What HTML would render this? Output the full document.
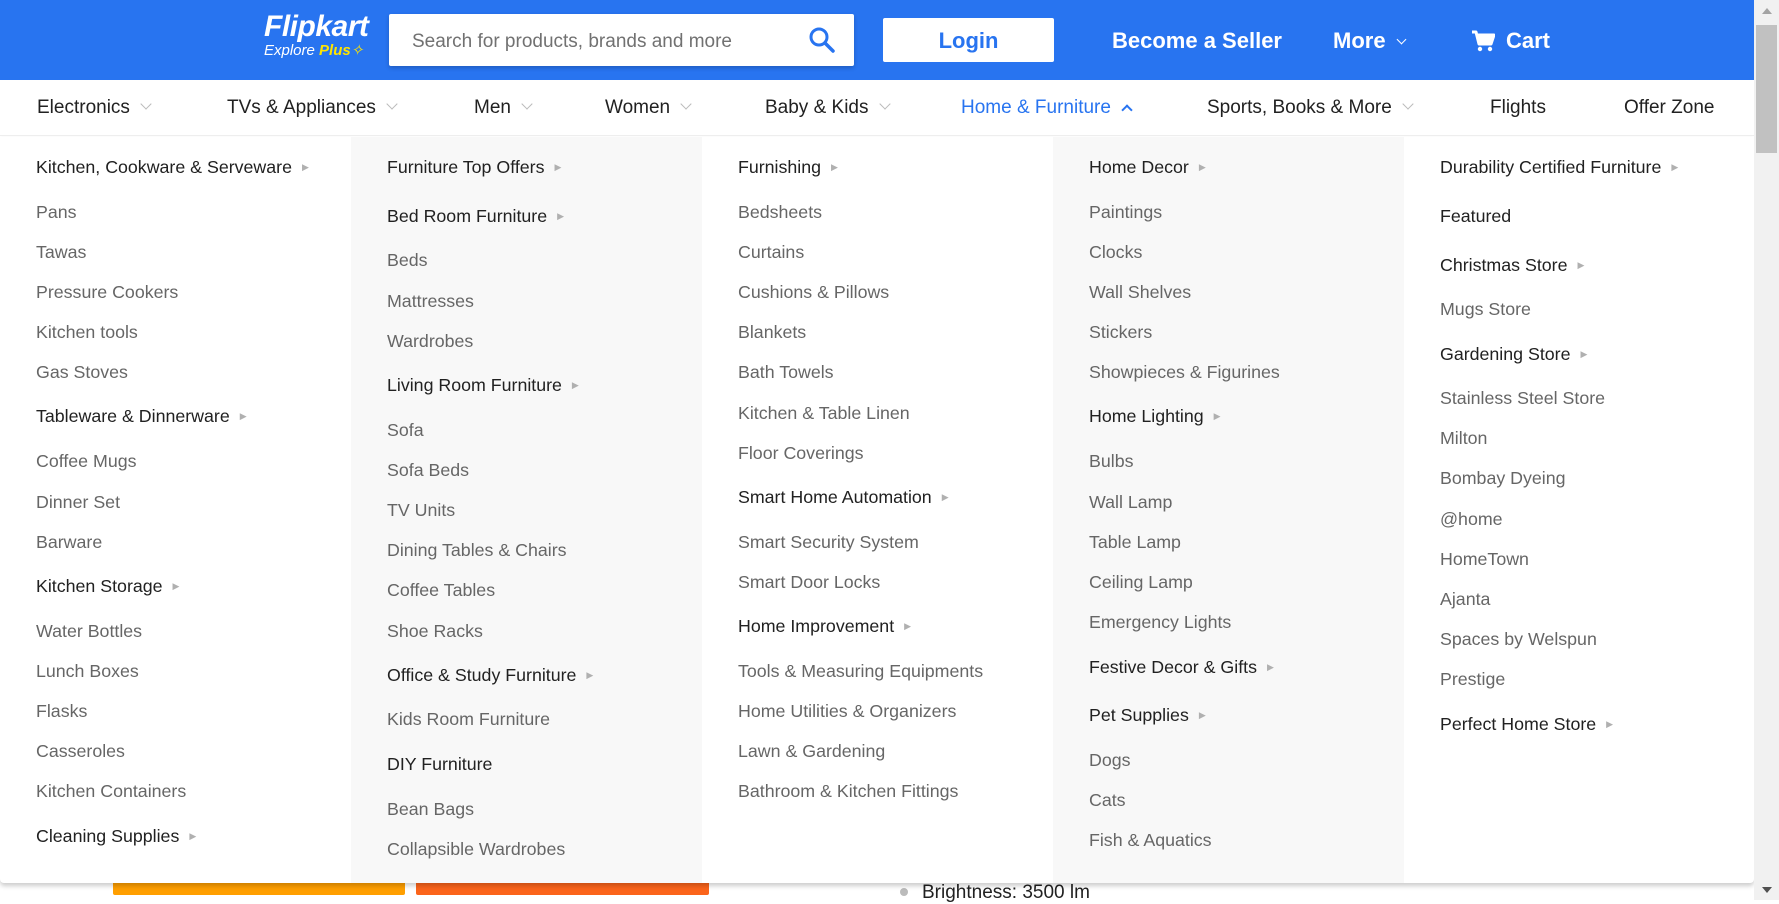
<!DOCTYPE html>
<html><head><meta charset="utf-8"><style>
*{margin:0;padding:0;box-sizing:border-box}
body{width:1779px;height:900px;overflow:hidden;background:#fff;font-family:"Liberation Sans",Arial,sans-serif;position:relative}
.hdr{position:absolute;left:0;top:0;width:1754px;height:80px;background:#2874f0}
.logo{position:absolute;left:264px;top:10px;color:#fff}
.logo .f{font-size:30px;font-weight:bold;font-style:italic;letter-spacing:-0.5px}
.logo .e{font-size:15px;font-style:italic;margin-top:-3px}
.logo .e b{color:#ffe500}
.search{position:absolute;left:389px;top:14px;width:465px;height:52px;background:#fff;border-radius:2px;box-shadow:0 2px 4px rgba(0,0,0,.2)}
.search span{position:absolute;left:23px;top:17px;font-size:19px;color:#717171}
.search svg{position:absolute;right:18px;top:12px}
.login{position:absolute;left:883px;top:18px;width:171px;height:44px;background:#fff;color:#2874f0;font-size:22px;font-weight:bold;text-align:center;line-height:46px;border-radius:2px}
.ht{position:absolute;top:28px;color:#fff;font-size:22px;font-weight:bold}
.nav{position:absolute;left:0;top:80px;width:1754px;height:56px;background:#fff;border-bottom:1px solid #eee}
.nav div{position:absolute;top:17px;font-size:19px;color:#212121;white-space:nowrap}
.chev{display:inline-block;width:8px;height:8px;border-right:1.5px solid #bbb;border-bottom:1.5px solid #bbb;transform:rotate(45deg);margin-left:12px;vertical-align:5px}
.up{display:inline-block;width:8px;height:8px;border-left:2px solid #2874f0;border-top:2px solid #2874f0;transform:rotate(45deg);margin-left:12px;vertical-align:-1px}
.dd{position:absolute;left:0;top:137px;width:1754px;height:746px;background:#fff;box-shadow:0 3px 5px rgba(0,0,0,.2);border-radius:0 0 4px 4px;overflow:hidden}
.col{position:absolute;top:0;width:351px;height:746px}
.g{background:#f8f8f8}
.col div{position:absolute;left:36px;font-size:17.8px;line-height:24px;color:#666;white-space:nowrap}
.col div.h{color:#212121}
.col div.h.a:after{content:"\25B6";font-size:9px;color:#b0b0b0;margin-left:10px;vertical-align:3px}
.sb{position:absolute;left:1754px;top:0;width:25px;height:900px;background:#f1f1f1}
.th{position:absolute;left:2px;top:25px;width:21px;height:128px;background:#c1c1c1}
</style></head><body>
<div class="hdr">
<div class="logo"><div class="f">Flipkart</div><div class="e">Explore <b>Plus</b><span style="color:#ffe500">✧</span></div></div>
<div class="search"><span>Search for products, brands and more</span>
<svg width="28" height="28" viewBox="0 0 28 28"><circle cx="11" cy="11" r="8" fill="none" stroke="#2874f0" stroke-width="3"/><path d="M17 17l8 8" stroke="#2874f0" stroke-width="3.5" stroke-linecap="round"/></svg></div>
<div class="login">Login</div>
<div class="ht" style="left:1112px">Become a Seller</div>
<div class="ht" style="left:1333px">More <span style="display:inline-block;width:7px;height:7px;border-right:1.5px solid #fff;border-bottom:1.5px solid #fff;transform:rotate(45deg);margin-left:6px;vertical-align:5px"></span></div>
<svg style="position:absolute;left:1471px;top:29px" width="24" height="24" viewBox="0 0 24 24"><path d="M1 3h4l3 12h12l3-9H7" fill="none" stroke="#fff" stroke-width="3" stroke-linejoin="round"/><path d="M7 7h15l-2 7H9z" fill="#fff"/><circle cx="9" cy="20" r="2.2" fill="#fff"/><circle cx="19" cy="20" r="2.2" fill="#fff"/></svg>
<div class="ht" style="left:1506px">Cart</div>
</div>
<div class="nav">
<div style="left:37px">Electronics<span class="chev"></span></div>
<div style="left:227px">TVs &amp; Appliances<span class="chev"></span></div>
<div style="left:474px">Men<span class="chev"></span></div>
<div style="left:605px">Women<span class="chev"></span></div>
<div style="left:765px">Baby &amp; Kids<span class="chev"></span></div>
<div style="left:961px;color:#2874f0">Home &amp; Furniture<span class="up"></span></div>
<div style="left:1207px">Sports, Books &amp; More<span class="chev"></span></div>
<div style="left:1490px">Flights</div>
<div style="left:1624px">Offer Zone</div>
</div>
<div style="position:absolute;left:113px;top:870px;width:292px;height:25px;background:#ff9f00;border-radius:2px"></div>
<div style="position:absolute;left:416px;top:870px;width:293px;height:25px;background:#fb641b;border-radius:2px"></div>
<div style="position:absolute;left:900px;top:888px;width:8px;height:8px;border-radius:50%;background:#bbb"></div>
<div style="position:absolute;left:922px;top:882px;font-size:19px;color:#212121">Brightness: 3500 lm</div>
<div class="dd">
<div class="col" style="left:0">
<div class="h a" style="top:18px">Kitchen, Cookware &amp; Serveware</div>
<div style="top:63px">Pans</div><div style="top:103px">Tawas</div><div style="top:143px">Pressure Cookers</div><div style="top:183px">Kitchen tools</div><div style="top:223px">Gas Stoves</div>
<div class="h a" style="top:267px">Tableware &amp; Dinnerware</div>
<div style="top:312px">Coffee Mugs</div><div style="top:353px">Dinner Set</div><div style="top:393px">Barware</div>
<div class="h a" style="top:437px">Kitchen Storage</div>
<div style="top:482px">Water Bottles</div><div style="top:522px">Lunch Boxes</div><div style="top:562px">Flasks</div><div style="top:602px">Casseroles</div><div style="top:642px">Kitchen Containers</div>
<div class="h a" style="top:687px">Cleaning Supplies</div>
</div>
<div class="col g" style="left:351px">
<div class="h a" style="top:18px">Furniture Top Offers</div>
<div class="h a" style="top:67px">Bed Room Furniture</div>
<div style="top:111px">Beds</div><div style="top:152px">Mattresses</div><div style="top:192px">Wardrobes</div>
<div class="h a" style="top:236px">Living Room Furniture</div>
<div style="top:281px">Sofa</div><div style="top:321px">Sofa Beds</div><div style="top:361px">TV Units</div><div style="top:401px">Dining Tables &amp; Chairs</div><div style="top:441px">Coffee Tables</div><div style="top:482px">Shoe Racks</div>
<div class="h a" style="top:526px">Office &amp; Study Furniture</div>
<div style="top:570px">Kids Room Furniture</div>
<div class="h" style="top:615px">DIY Furniture</div>
<div style="top:660px">Bean Bags</div><div style="top:700px">Collapsible Wardrobes</div>
</div>
<div class="col" style="left:702px">
<div class="h a" style="top:18px">Furnishing</div>
<div style="top:63px">Bedsheets</div><div style="top:103px">Curtains</div><div style="top:143px">Cushions &amp; Pillows</div><div style="top:183px">Blankets</div><div style="top:223px">Bath Towels</div><div style="top:264px">Kitchen &amp; Table Linen</div><div style="top:304px">Floor Coverings</div>
<div class="h a" style="top:348px">Smart Home Automation</div>
<div style="top:393px">Smart Security System</div><div style="top:433px">Smart Door Locks</div>
<div class="h a" style="top:477px">Home Improvement</div>
<div style="top:522px">Tools &amp; Measuring Equipments</div><div style="top:562px">Home Utilities &amp; Organizers</div><div style="top:602px">Lawn &amp; Gardening</div><div style="top:642px">Bathroom &amp; Kitchen Fittings</div>
</div>
<div class="col g" style="left:1053px">
<div class="h a" style="top:18px">Home Decor</div>
<div style="top:63px">Paintings</div><div style="top:103px">Clocks</div><div style="top:143px">Wall Shelves</div><div style="top:183px">Stickers</div><div style="top:223px">Showpieces &amp; Figurines</div>
<div class="h a" style="top:267px">Home Lighting</div>
<div style="top:312px">Bulbs</div><div style="top:353px">Wall Lamp</div><div style="top:393px">Table Lamp</div><div style="top:433px">Ceiling Lamp</div><div style="top:473px">Emergency Lights</div>
<div class="h a" style="top:518px">Festive Decor &amp; Gifts</div>
<div class="h a" style="top:566px">Pet Supplies</div>
<div style="top:611px">Dogs</div><div style="top:651px">Cats</div><div style="top:691px">Fish &amp; Aquatics</div>
</div>
<div class="col" style="left:1404px">
<div class="h a" style="top:18px">Durability Certified Furniture</div>
<div class="h" style="top:67px">Featured</div>
<div class="h a" style="top:116px">Christmas Store</div>
<div style="top:160px">Mugs Store</div>
<div class="h a" style="top:205px">Gardening Store</div>
<div style="top:249px">Stainless Steel Store</div><div style="top:289px">Milton</div><div style="top:329px">Bombay Dyeing</div><div style="top:370px">@home</div><div style="top:410px">HomeTown</div><div style="top:450px">Ajanta</div><div style="top:490px">Spaces by Welspun</div><div style="top:530px">Prestige</div>
<div class="h a" style="top:575px">Perfect Home Store</div>
</div>
</div>
<div class="sb"><div style="position:absolute;left:8px;top:8px;border:5px solid transparent;border-bottom:6px solid #a3a3a3;border-top:0"></div><div class="th"></div><div style="position:absolute;left:8px;top:887px;border:5px solid transparent;border-top:6px solid #505050;border-bottom:0"></div></div>
</body></html>
